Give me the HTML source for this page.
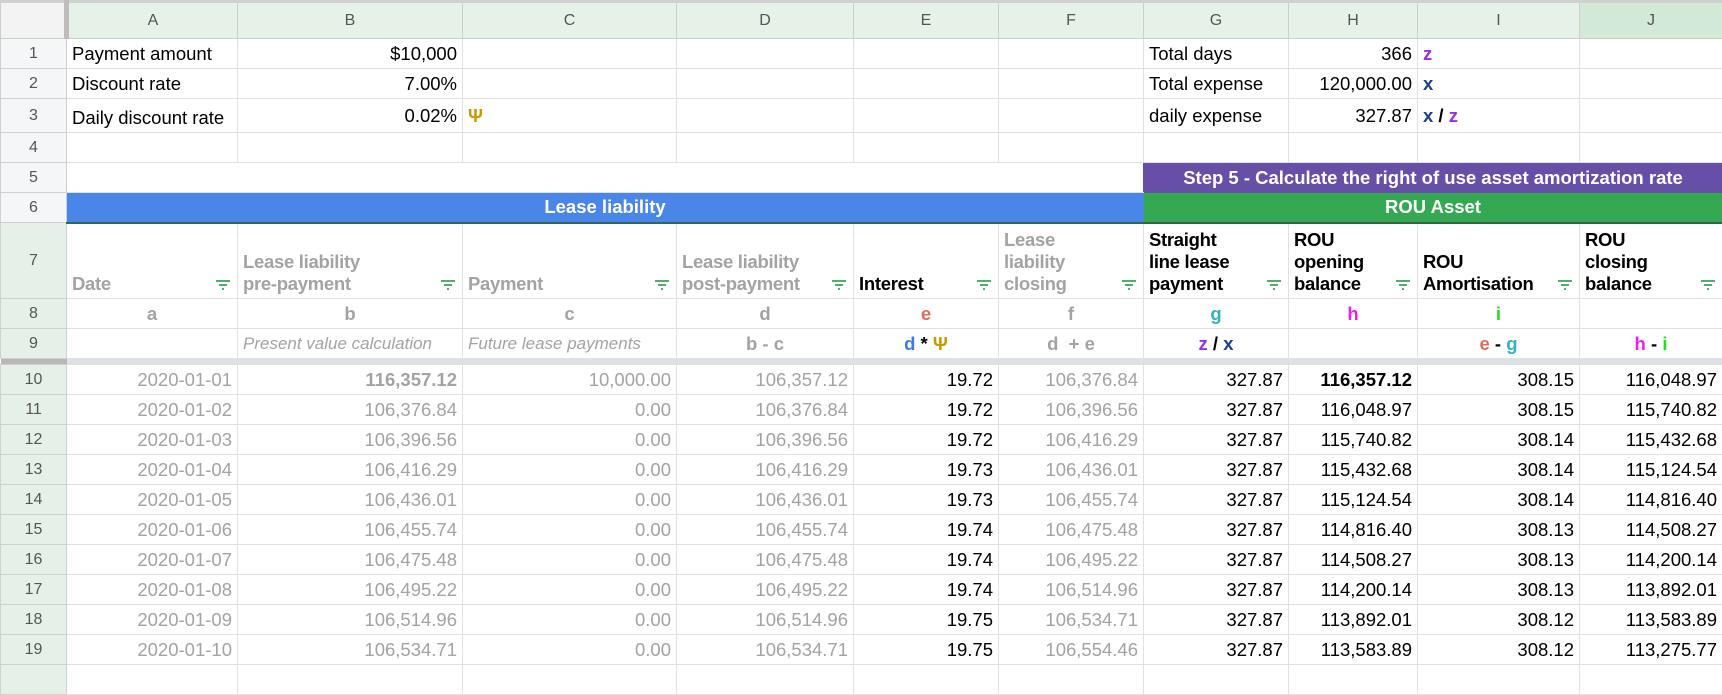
<!DOCTYPE html>
<html><head><meta charset="utf-8"><style>
*{box-sizing:border-box;margin:0;padding:0}
body{width:1722px;height:666px;overflow:hidden;background:#fff;font-family:"Liberation Sans",Arial,sans-serif;font-size:18.5px;color:#000}
table{border-collapse:collapse;table-layout:fixed;width:1722px}
td{border:1px solid #e1e1e1;padding:0 5px;white-space:nowrap;overflow:hidden;height:30px;line-height:22px}
.ch{background:#e6f2e8;color:#555;text-align:center;font-size:16px;border-color:#c8d0c8;height:37px;border-top:3px solid #d0d0d0}
.rh{background:#f5f6f7;color:#555;text-align:center;font-size:16px;border-color:#d0d0d0;padding:0}
.rg{background:#e5f1e8}
.r{text-align:right}.c{text-align:center}
.g{color:#a3a3a3}
.b{font-weight:bold}
.hd{vertical-align:bottom;white-space:nowrap;font-weight:bold;line-height:22px;padding-bottom:3px;position:relative;padding-right:28px;letter-spacing:-0.3px}
.hd svg{position:absolute;right:6px;bottom:7px}
.it{font-style:italic;color:#a3a3a3;font-size:17px}
.sep td{height:6px;padding:0;background:#dde1e6;border:none}
.sep td.rh{background:#b8b8b8}
</style></head><body>
<table>
<colgroup><col style="width:66px"><col style="width:171px"><col style="width:225px"><col style="width:214px"><col style="width:177px"><col style="width:145px"><col style="width:145px"><col style="width:145px"><col style="width:129px"><col style="width:162px"><col style="width:143px"></colgroup>
<tr><td class="ch" style="background:#f3f3f3;border-right:5px solid #bdbdbd"></td><td class="ch">A</td><td class="ch">B</td><td class="ch">C</td><td class="ch">D</td><td class="ch">E</td><td class="ch">F</td><td class="ch">G</td><td class="ch">H</td><td class="ch">I</td><td class="ch" style="background:#d3e9d7">J</td></tr>
<tr><td class="rh">1</td><td>Payment amount</td><td class="r">$10,000</td><td></td><td></td><td></td><td></td><td>Total days</td><td class="r">366</td><td class="b" style="color:#9a2ee6">z</td><td></td></tr>
<tr><td class="rh">2</td><td>Discount rate</td><td class="r">7.00%</td><td></td><td></td><td></td><td></td><td>Total expense</td><td class="r">120,000.00</td><td class="b" style="color:#1c3f8c">x</td><td></td></tr>
<tr><td class="rh" style="height:34px">3</td><td style="padding-top:4px">Daily discount rate</td><td class="r">0.02%</td><td class="b" style="color:#c99a00">Ψ</td><td></td><td></td><td></td><td>daily expense</td><td class="r">327.87</td><td class="b"><span style="color:#1c3f8c">x</span> / <span style="color:#9a2ee6">z</span></td><td></td></tr>
<tr><td class="rh">4</td><td></td><td></td><td></td><td></td><td></td><td></td><td></td><td></td><td></td><td></td></tr>
<tr><td class="rh">5</td><td colspan="6" style="border-left:none;border-right:none"></td><td colspan="4" class="c b" style="background:#674ea7;color:#fff;border-color:#674ea7">Step 5 - Calculate the right of use asset amortization rate</td></tr>
<tr><td class="rh">6</td><td colspan="6" class="c b" style="background:#4a86e8;color:#fff;border-color:#4a86e8;border-bottom:2px solid #2a6a5a">Lease liability</td><td colspan="4" class="c b" style="background:#34a853;color:#fff;border-color:#34a853;border-bottom:2px solid #2a6a3a">ROU Asset</td></tr>
<tr><td class="rh rg" style="height:76px">7</td>
<td class="hd g">Date<svg width="16" height="12"><path d="M1 2h14M4 6h8M7 10h2" stroke="#1e8e3e" stroke-width="1.6"/></svg></td>
<td class="hd g">Lease liability<br>pre-payment<svg width="16" height="12"><path d="M1 2h14M4 6h8M7 10h2" stroke="#1e8e3e" stroke-width="1.6"/></svg></td>
<td class="hd g">Payment<svg width="16" height="12"><path d="M1 2h14M4 6h8M7 10h2" stroke="#1e8e3e" stroke-width="1.6"/></svg></td>
<td class="hd g">Lease liability<br>post-payment<svg width="16" height="12"><path d="M1 2h14M4 6h8M7 10h2" stroke="#1e8e3e" stroke-width="1.6"/></svg></td>
<td class="hd">Interest<svg width="16" height="12"><path d="M1 2h14M4 6h8M7 10h2" stroke="#1e8e3e" stroke-width="1.6"/></svg></td>
<td class="hd g">Lease<br>liability<br>closing<svg width="16" height="12"><path d="M1 2h14M4 6h8M7 10h2" stroke="#1e8e3e" stroke-width="1.6"/></svg></td>
<td class="hd">Straight<br>line lease<br>payment<svg width="16" height="12"><path d="M1 2h14M4 6h8M7 10h2" stroke="#1e8e3e" stroke-width="1.6"/></svg></td>
<td class="hd">ROU<br>opening<br>balance<svg width="16" height="12"><path d="M1 2h14M4 6h8M7 10h2" stroke="#1e8e3e" stroke-width="1.6"/></svg></td>
<td class="hd">ROU<br>Amortisation<svg width="16" height="12"><path d="M1 2h14M4 6h8M7 10h2" stroke="#1e8e3e" stroke-width="1.6"/></svg></td>
<td class="hd">ROU<br>closing<br>balance<svg width="16" height="12"><path d="M1 2h14M4 6h8M7 10h2" stroke="#1e8e3e" stroke-width="1.6"/></svg></td></tr>
<tr><td class="rh rg">8</td><td class="c b g">a</td><td class="c b g">b</td><td class="c b g">c</td><td class="c b g">d</td><td class="c b" style="color:#e06c5a">e</td><td class="c b g">f</td><td class="c b" style="color:#2fb3c3">g</td><td class="c b" style="color:#f01df0">h</td><td class="c b" style="color:#22dd22">i</td><td></td></tr>
<tr><td class="rh rg">9</td><td></td><td class="it">Present value calculation</td><td class="it">Future lease payments</td><td class="c b g">b - c</td><td class="c b"><span style="color:#3d7be8">d</span> * <span style="color:#c99a00">Ψ</span></td><td class="c b g">d &nbsp;+ e</td><td class="c b"><span style="color:#9a2ee6">z</span> / <span style="color:#1c3f8c">x</span></td><td></td><td class="c b"><span style="color:#e06c5a">e</span> - <span style="color:#2fb3c3">g</span></td><td class="c b"><span style="color:#f01df0">h</span> - <span style="color:#22dd22">i</span></td></tr>
<tr class="sep"><td class="rh"></td><td></td><td></td><td></td><td></td><td></td><td></td><td></td><td></td><td></td><td></td></tr>
<tr><td class="rh rg">10</td><td class="r g">2020-01-01</td><td class="r g b">116,357.12</td><td class="r g">10,000.00</td><td class="r g">106,357.12</td><td class="r">19.72</td><td class="r g">106,376.84</td><td class="r">327.87</td><td class="r b">116,357.12</td><td class="r">308.15</td><td class="r">116,048.97</td></tr>
<tr><td class="rh rg">11</td><td class="r g">2020-01-02</td><td class="r g">106,376.84</td><td class="r g">0.00</td><td class="r g">106,376.84</td><td class="r">19.72</td><td class="r g">106,396.56</td><td class="r">327.87</td><td class="r">116,048.97</td><td class="r">308.15</td><td class="r">115,740.82</td></tr>
<tr><td class="rh rg">12</td><td class="r g">2020-01-03</td><td class="r g">106,396.56</td><td class="r g">0.00</td><td class="r g">106,396.56</td><td class="r">19.72</td><td class="r g">106,416.29</td><td class="r">327.87</td><td class="r">115,740.82</td><td class="r">308.14</td><td class="r">115,432.68</td></tr>
<tr><td class="rh rg">13</td><td class="r g">2020-01-04</td><td class="r g">106,416.29</td><td class="r g">0.00</td><td class="r g">106,416.29</td><td class="r">19.73</td><td class="r g">106,436.01</td><td class="r">327.87</td><td class="r">115,432.68</td><td class="r">308.14</td><td class="r">115,124.54</td></tr>
<tr><td class="rh rg">14</td><td class="r g">2020-01-05</td><td class="r g">106,436.01</td><td class="r g">0.00</td><td class="r g">106,436.01</td><td class="r">19.73</td><td class="r g">106,455.74</td><td class="r">327.87</td><td class="r">115,124.54</td><td class="r">308.14</td><td class="r">114,816.40</td></tr>
<tr><td class="rh rg">15</td><td class="r g">2020-01-06</td><td class="r g">106,455.74</td><td class="r g">0.00</td><td class="r g">106,455.74</td><td class="r">19.74</td><td class="r g">106,475.48</td><td class="r">327.87</td><td class="r">114,816.40</td><td class="r">308.13</td><td class="r">114,508.27</td></tr>
<tr><td class="rh rg">16</td><td class="r g">2020-01-07</td><td class="r g">106,475.48</td><td class="r g">0.00</td><td class="r g">106,475.48</td><td class="r">19.74</td><td class="r g">106,495.22</td><td class="r">327.87</td><td class="r">114,508.27</td><td class="r">308.13</td><td class="r">114,200.14</td></tr>
<tr><td class="rh rg">17</td><td class="r g">2020-01-08</td><td class="r g">106,495.22</td><td class="r g">0.00</td><td class="r g">106,495.22</td><td class="r">19.74</td><td class="r g">106,514.96</td><td class="r">327.87</td><td class="r">114,200.14</td><td class="r">308.13</td><td class="r">113,892.01</td></tr>
<tr><td class="rh rg">18</td><td class="r g">2020-01-09</td><td class="r g">106,514.96</td><td class="r g">0.00</td><td class="r g">106,514.96</td><td class="r">19.75</td><td class="r g">106,534.71</td><td class="r">327.87</td><td class="r">113,892.01</td><td class="r">308.12</td><td class="r">113,583.89</td></tr>
<tr><td class="rh rg">19</td><td class="r g">2020-01-10</td><td class="r g">106,534.71</td><td class="r g">0.00</td><td class="r g">106,534.71</td><td class="r">19.75</td><td class="r g">106,554.46</td><td class="r">327.87</td><td class="r">113,583.89</td><td class="r">308.12</td><td class="r">113,275.77</td></tr>
<tr><td class="rh rg"></td><td></td><td></td><td></td><td></td><td></td><td></td><td></td><td></td><td></td><td></td></tr>
</table>
</body></html>
